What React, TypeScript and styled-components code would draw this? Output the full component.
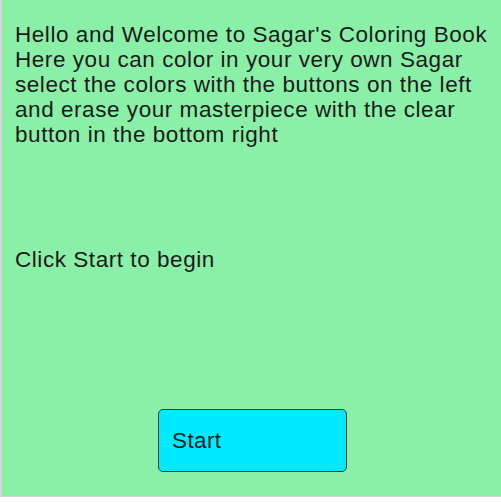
import styled, { createGlobalStyle } from "styled-components";

const GlobalStyle = createGlobalStyle`
  html, body {
    margin: 0;
    padding: 0;
    background: #ffffff;
  }
  body {
    font-family: "Liberation Sans", Arial, sans-serif;
  }
`;

// Screen wrapper, the green board
const Board = styled.div`
  width: 501px;
  height: 497px;
  box-sizing: border-box;
  background-color: #8af0a8;
  border-left: 2px solid #d6d6d6;
  border-bottom: 1px solid #d6d6d6;
  display: flex;
  flex-direction: column;
  padding: 22px 0 0 13px;
`;

const Intro = styled.p`
  margin: 0;
  font-size: 22.5px;
  letter-spacing: 0.55px;
  line-height: 25px;
  color: #1b1b1b;
`;

const Prompt = styled.p`
  margin: 100px 0 0 0;
  font-size: 22.5px;
  letter-spacing: 0.55px;
  line-height: 25px;
  color: #1b1b1b;
`;

const ButtonRow = styled.div`
  margin-top: auto;
  margin-bottom: 24px;
  padding-left: 143px;
`;

const StartButton = styled.button`
  width: 189px;
  height: 63px;
  box-sizing: border-box;
  background-color: #00eaff;
  border: 1px solid #2a3a3a;
  border-radius: 5px;
  text-align: left;
  padding: 0 0 0 13px;
  font-family: "Liberation Sans", Arial, sans-serif;
  font-size: 22.5px;
  letter-spacing: 0.4px;
  color: #1b1b1b;
  cursor: pointer;
`;

const App = () => {
  const lines = [
    "Hello and Welcome to Sagar's Coloring Book",
    "Here you can color in your very own Sagar",
    "select the colors with the buttons on the left",
    "and erase your masterpiece with the clear",
    "button in the bottom right",
  ];

  return (
    <>
      <GlobalStyle />
      <Board>
        <Intro>
          {lines.map((line, i) => (
            <span key={i}>
              {line}
              <br />
            </span>
          ))}
        </Intro>
        <Prompt>Click Start to begin</Prompt>
        <ButtonRow>
          <StartButton>Start</StartButton>
        </ButtonRow>
      </Board>
    </>
  );
};

export default App;
